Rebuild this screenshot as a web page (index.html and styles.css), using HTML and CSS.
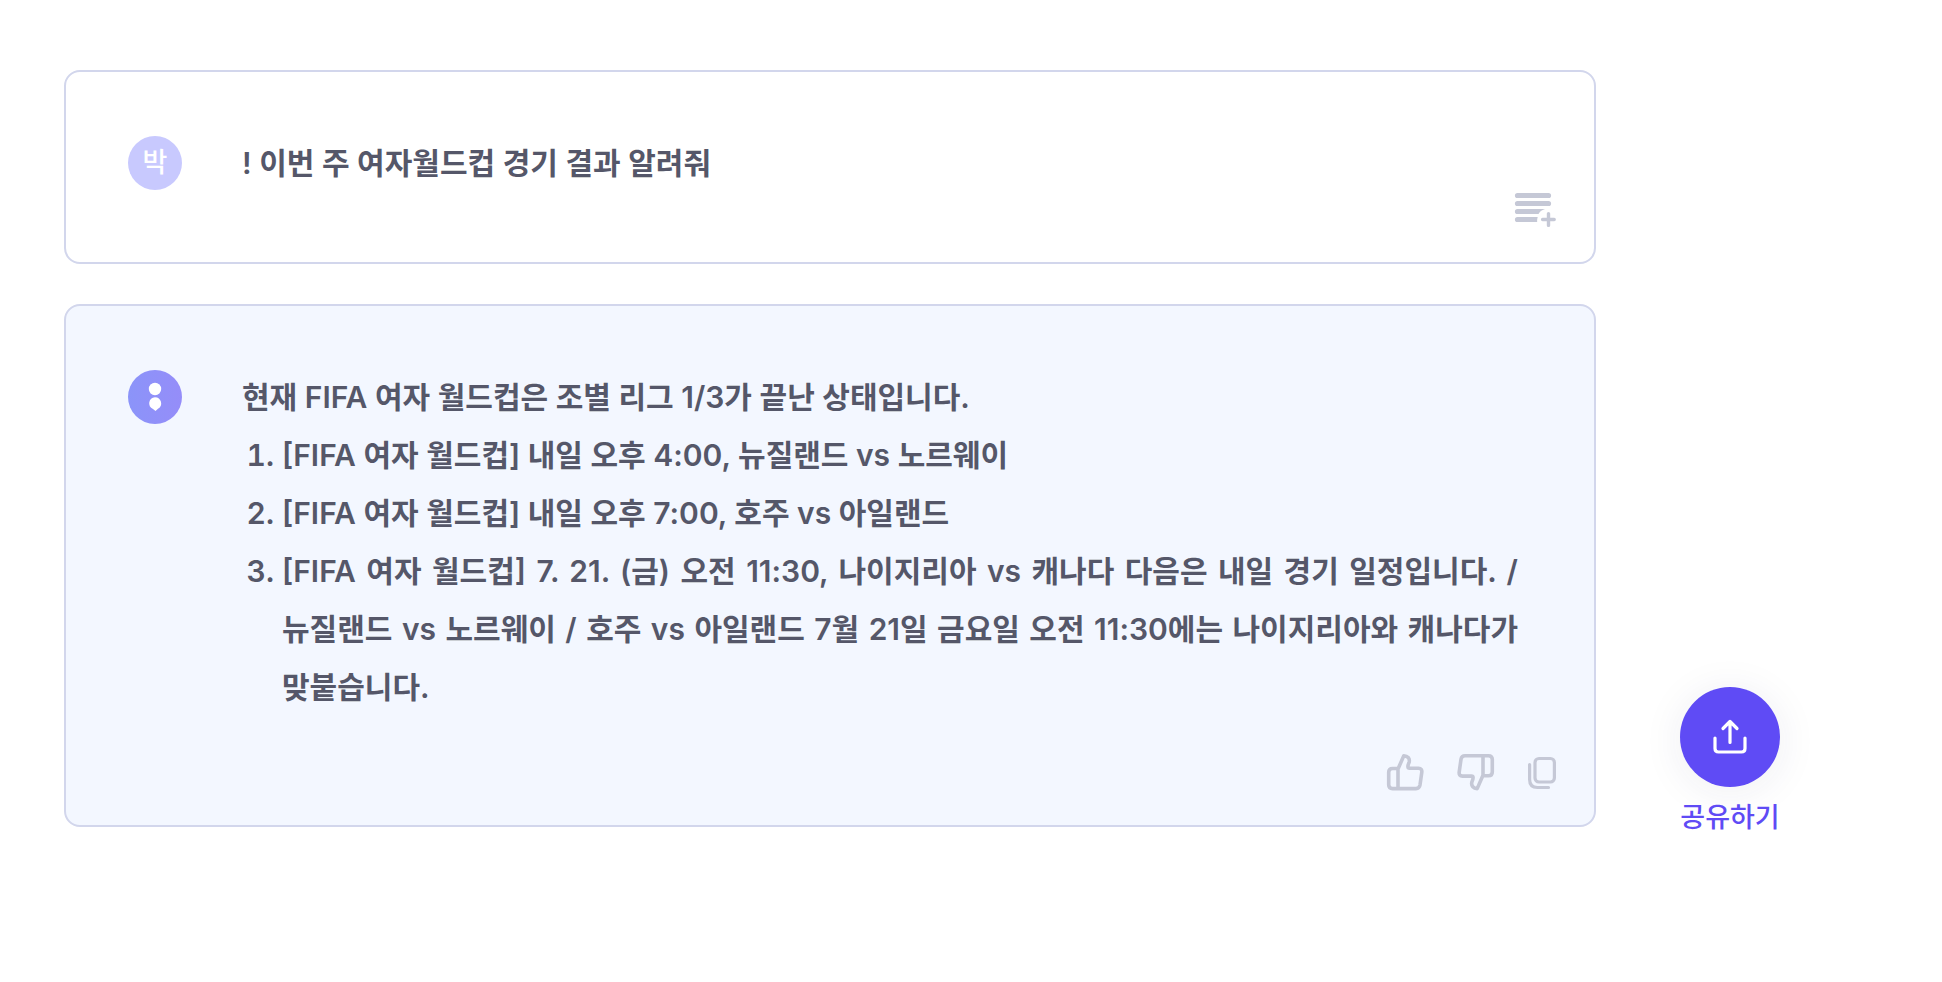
FILE: index.html
```html
<!DOCTYPE html>
<html lang="ko">
<head>
<meta charset="utf-8">
<meta name="viewport" content="width=device-width, initial-scale=1">
<title>대화 공유</title>
<link rel="stylesheet" href="styles.css">
</head>
<body>
<div class="page">
  <main class="chat">
    <article class="card">
      <div class="avatar avatar-user">박</div>
      <div class="message"><p>! 이번 주 여자월드컵 경기 결과 알려줘</p></div>
      <footer class="actions">
        <button type="button" class="icon-button" aria-label="목록에 추가">
          <svg width="42" height="36" viewBox="0 0 42 36" fill="none" stroke="currentColor" stroke-linecap="round">
            <path stroke-width="5.200" d="M3.500 3.500H34.500M3.500 11.500H34.500"/>
            <path fill="currentColor" stroke="none" d="M3.500 16.900H31Q26 18.500 24.500 22.100H3.500A2.600 2.600 0 0 1 3.500 16.900ZM3.500 24.900H23.700Q22.900 27.500 23.200 30.100H3.500A2.600 2.600 0 0 1 3.500 24.900Z"/>
            <path stroke-width="3.400" d="M28.600 27.500H40.200M34.500 21.600V33.400"/>
          </svg>
        </button>
      </footer>
    </article>

    <article class="card card-answer">
      <div class="avatar avatar-bot">
        <svg width="54" height="54" viewBox="0 0 54 54" fill="#fff" aria-hidden="true">
          <circle cx="27" cy="19" r="6.200"/>
          <path d="M27 27.200a6.200 6.200 0 0 1 3 11.600L27.500 41L25 39.100A6.200 6.200 0 0 1 27 27.200Z"/>
        </svg>
      </div>
      <div class="message">
        <p>현재 FIFA 여자 월드컵은 조별 리그 1/3가 끝난 상태입니다.</p>
        <ol>
          <li>[FIFA 여자 월드컵] 내일 오후 4:00, 뉴질랜드 vs 노르웨이</li>
          <li>[FIFA 여자 월드컵] 내일 오후 7:00, 호주 vs 아일랜드</li>
          <li>[FIFA 여자 월드컵] 7. 21. (금) 오전 11:30, 나이지리아 vs 캐나다 다음은 내일 경기 일정입니다. / 뉴질랜드 vs 노르웨이 / 호주 vs 아일랜드 7월 21일 금요일 오전 11:30에는 나이지리아와 캐나다가 맞붙습니다.</li>
        </ol>
      </div>
      <footer class="actions">
        <button type="button" class="icon-button" aria-label="좋아요">
          <svg width="38" height="38" viewBox="0 0 38 38" fill="none" stroke="currentColor" stroke-width="3.600" stroke-linejoin="round">
            <path d="M12 16 17.800 2.700C21.500 2.900 24 5.400 23.200 9Q20.500 15.200 23.500 15.200H32.500Q36.300 15.400 35.800 19.200L34 32Q33.400 35.600 30 35.600H6.500Q2.700 35.600 2.700 31.800V19.300Q2.700 15.500 6.500 15.500H12V35.600"/>
          </svg>
        </button>
        <button type="button" class="icon-button" aria-label="싫어요">
          <svg width="38" height="38" viewBox="0 0 38 38" fill="none" stroke="currentColor" stroke-width="3.600" stroke-linejoin="round">
            <path d="M26 22.300 20.200 35.600C16.500 35.400 14 32.900 14.800 29.300Q17.500 23.100 14.500 23.100H5.500Q1.700 22.900 2.200 19.100L4 6.300Q4.600 2.700 8 2.700H31.500Q35.300 2.700 35.300 6.500V19Q35.300 22.800 31.500 22.800H26V2.700"/>
          </svg>
        </button>
        <button type="button" class="icon-button" aria-label="복사">
          <svg width="28" height="38" viewBox="1 0 28 38" fill="none" stroke="currentColor" stroke-width="3.200" stroke-linecap="round">
            <rect x="8" y="5.500" width="19.400" height="23.500" rx="4"/>
            <path d="M2.600 11.500V26.500Q2.600 34.500 10.500 34.500H21.500"/>
          </svg>
        </button>
      </footer>
    </article>
  </main>

  <aside class="share">
    <button type="button" class="share-button" aria-labelledby="share-label">
      <svg width="36" height="36" viewBox="0 0 36 36" fill="none" stroke="currentColor" stroke-width="3.200" stroke-linecap="round" stroke-linejoin="round">
        <path d="M18 23.500V3.500M11 9.500 18 2.500 25 9.500M3 19V29.500Q3 33 6.500 33H29.500Q33 33 33 29.500V19"/>
      </svg>
    </button>
    <span id="share-label" class="share-label">공유하기</span>
  </aside>
</div>
</body>
</html>
```
FILE: styles.css
```css
* {
  box-sizing: border-box;
}

body {
  margin: 0;
  background: #fff;
  color: #555769;
  font-family: Inter, "Noto Sans CJK KR", sans-serif;
  font-size: 30px;
  font-weight: 600;
  line-height: 58px;
}

p,
ol {
  margin: 0;
}

button {
  padding: 0;
  border: 0;
  background: none;
  font: inherit;
  cursor: pointer;
}

svg {
  display: block;
}

.page {
  display: flex;
  align-items: flex-end;
  gap: 84px;
  padding: 70px 162px 64px 64px;
}

.chat {
  display: flex;
  flex: 1;
  flex-direction: column;
  gap: 40px;
  min-width: 0;
  padding-bottom: 11px;
}

.card {
  display: grid;
  grid-template-columns: 54px 1fr;
  column-gap: 60px;
  padding: 62px 38px 34px 62px;
  border: 2px solid #d2d6ec;
  border-radius: 16px;
  background: #fff;
}

.card-answer {
  row-gap: 37px;
  background: #f3f7ff;
}

.avatar {
  display: grid;
  place-items: center;
  width: 54px;
  height: 54px;
  margin-top: 2px;
  border-radius: 50%;
  color: #fff;
  font-size: 27px;
  font-weight: 500;
  line-height: 54px;
}

.avatar-user {
  background: #c8c9fe;
}

.avatar-bot {
  background: linear-gradient(90deg, #8b94f9, #958df9);
}

.message {
  padding-right: 38px;
  text-align: justify;
  word-break: keep-all;
}

.message ol {
  padding-left: 40px;
}

.actions {
  display: flex;
  grid-column: 1 / -1;
  justify-content: flex-end;
  gap: 33px;
}

.icon-button {
  color: #c5c8d6;
}

.share {
  display: flex;
  flex-direction: column;
  align-items: center;
  gap: 11px;
  width: 100px;
}

.share-button {
  display: grid;
  place-items: center;
  width: 100px;
  height: 100px;
  border-radius: 50%;
  background: #5f4bf5;
  box-shadow: 0 4px 40px rgba(40, 40, 90, 0.08);
  color: #fff;
}

.share-label {
  color: #5f4bf5;
  font-size: 27px;
  font-weight: 500;
  line-height: 40px;
  white-space: nowrap;
}
```
